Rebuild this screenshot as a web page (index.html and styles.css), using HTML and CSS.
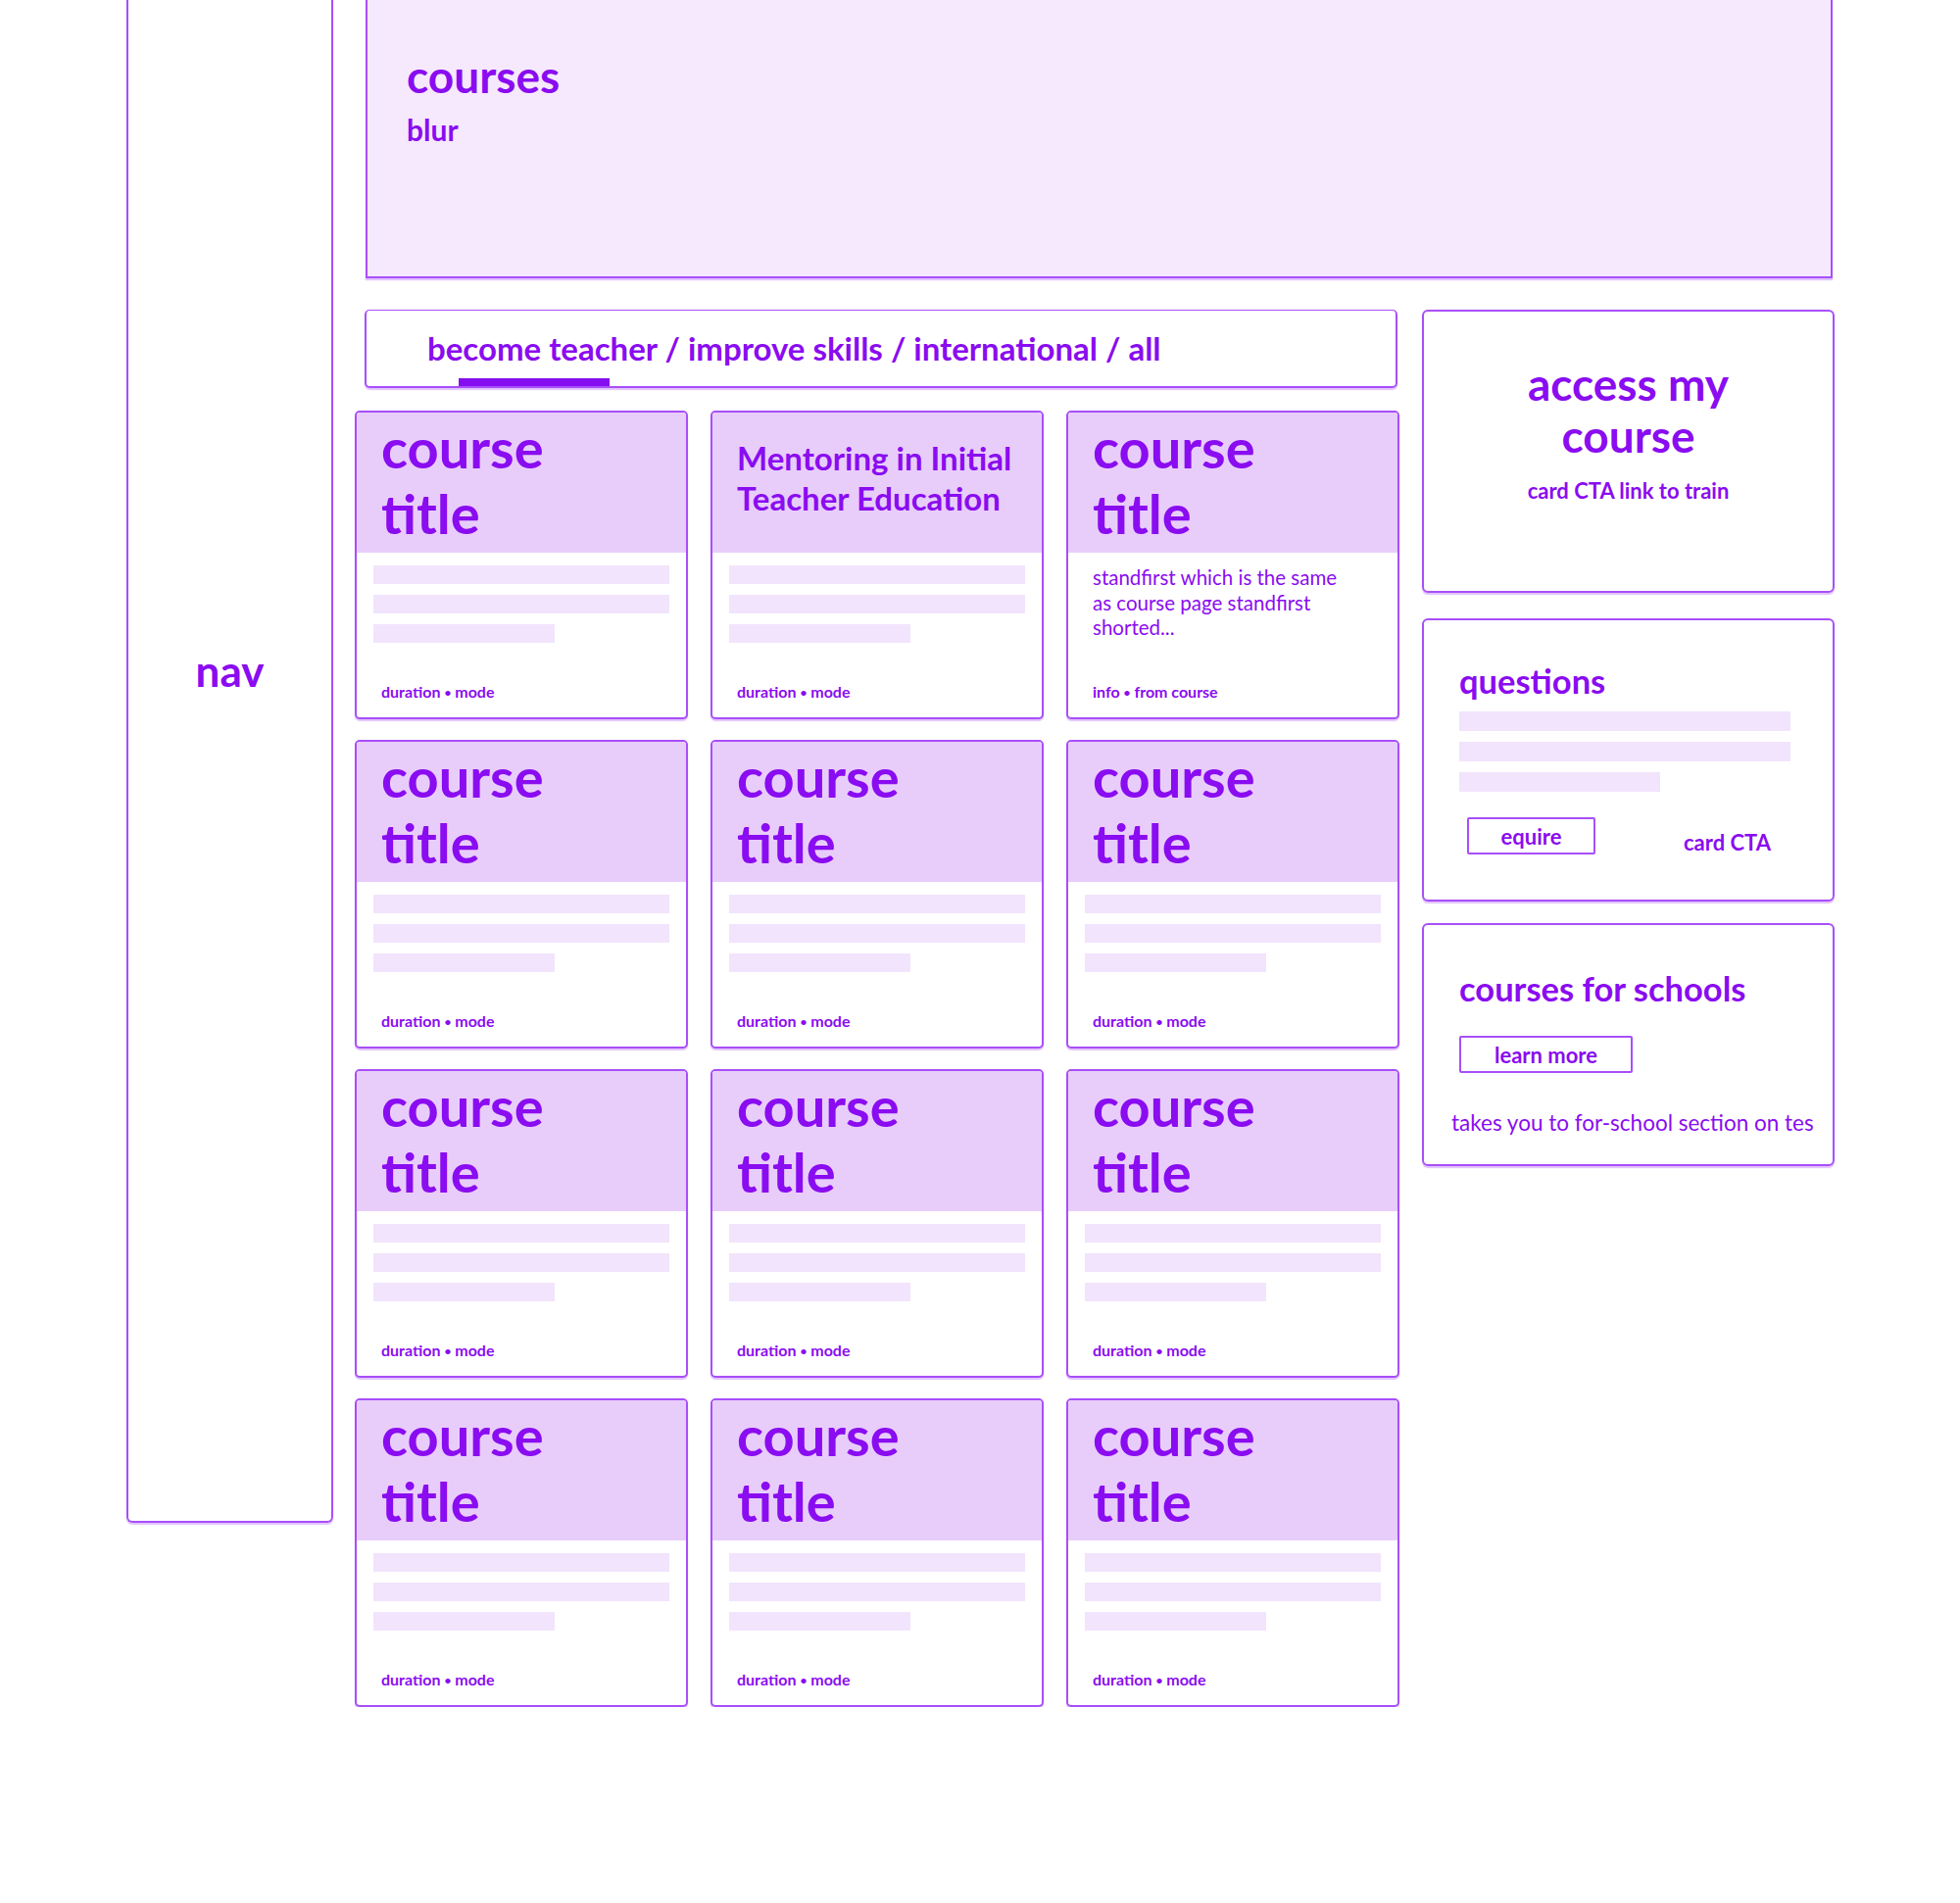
FILE: index.html
```html
<!DOCTYPE html>
<html lang="en">
<head>
    <meta charset="UTF-8">
    <title>Courses - wireframe</title>
    <link rel="stylesheet" href="styles.css">
</head>
<body>
    <div class="page">
        <aside class="nav">
            <span class="nav-label">nav</span>
        </aside>

        <main class="main">
            <header class="hero">
                <h1>courses</h1>
                <p class="hero-sub">blur</p>
            </header>

            <div class="content">
                <section class="catalogue">
                    <div class="tabs">
                        <p class="tab-links">become teacher / improve skills / international / all</p>
                        <div class="tab-indicator"></div>
                    </div>

                    <div class="course-grid">
                        <div class="course-card">
                            <div class="course-head"><h2 class="course-title">course title</h2></div>
                            <div class="course-body">
                                <div class="bar"></div>
                                <div class="bar"></div>
                                <div class="bar short"></div>
                            </div>
                            <p class="course-meta">duration <span class="dot">&bull;</span> mode</p>
                        </div>
                        <div class="course-card">
                            <div class="course-head"><h2 class="course-title small">Mentoring in Initial Teacher Education</h2></div>
                            <div class="course-body">
                                <div class="bar"></div>
                                <div class="bar"></div>
                                <div class="bar short"></div>
                            </div>
                            <p class="course-meta">duration <span class="dot">&bull;</span> mode</p>
                        </div>
                        <div class="course-card">
                            <div class="course-head"><h2 class="course-title">course title</h2></div>
                            <div class="course-body">
                                <p class="standfirst">standfirst which is the same as course page standfirst shorted...</p>
                            </div>
                            <p class="course-meta">info <span class="dot">&bull;</span> from course</p>
                        </div>

                        <div class="course-card">
                            <div class="course-head"><h2 class="course-title">course title</h2></div>
                            <div class="course-body">
                                <div class="bar"></div>
                                <div class="bar"></div>
                                <div class="bar short"></div>
                            </div>
                            <p class="course-meta">duration <span class="dot">&bull;</span> mode</p>
                        </div>
                        <div class="course-card">
                            <div class="course-head"><h2 class="course-title">course title</h2></div>
                            <div class="course-body">
                                <div class="bar"></div>
                                <div class="bar"></div>
                                <div class="bar short"></div>
                            </div>
                            <p class="course-meta">duration <span class="dot">&bull;</span> mode</p>
                        </div>
                        <div class="course-card">
                            <div class="course-head"><h2 class="course-title">course title</h2></div>
                            <div class="course-body">
                                <div class="bar"></div>
                                <div class="bar"></div>
                                <div class="bar short"></div>
                            </div>
                            <p class="course-meta">duration <span class="dot">&bull;</span> mode</p>
                        </div>

                        <div class="course-card">
                            <div class="course-head"><h2 class="course-title">course title</h2></div>
                            <div class="course-body">
                                <div class="bar"></div>
                                <div class="bar"></div>
                                <div class="bar short"></div>
                            </div>
                            <p class="course-meta">duration <span class="dot">&bull;</span> mode</p>
                        </div>
                        <div class="course-card">
                            <div class="course-head"><h2 class="course-title">course title</h2></div>
                            <div class="course-body">
                                <div class="bar"></div>
                                <div class="bar"></div>
                                <div class="bar short"></div>
                            </div>
                            <p class="course-meta">duration <span class="dot">&bull;</span> mode</p>
                        </div>
                        <div class="course-card">
                            <div class="course-head"><h2 class="course-title">course title</h2></div>
                            <div class="course-body">
                                <div class="bar"></div>
                                <div class="bar"></div>
                                <div class="bar short"></div>
                            </div>
                            <p class="course-meta">duration <span class="dot">&bull;</span> mode</p>
                        </div>

                        <div class="course-card">
                            <div class="course-head"><h2 class="course-title">course title</h2></div>
                            <div class="course-body">
                                <div class="bar"></div>
                                <div class="bar"></div>
                                <div class="bar short"></div>
                            </div>
                            <p class="course-meta">duration <span class="dot">&bull;</span> mode</p>
                        </div>
                        <div class="course-card">
                            <div class="course-head"><h2 class="course-title">course title</h2></div>
                            <div class="course-body">
                                <div class="bar"></div>
                                <div class="bar"></div>
                                <div class="bar short"></div>
                            </div>
                            <p class="course-meta">duration <span class="dot">&bull;</span> mode</p>
                        </div>
                        <div class="course-card">
                            <div class="course-head"><h2 class="course-title">course title</h2></div>
                            <div class="course-body">
                                <div class="bar"></div>
                                <div class="bar"></div>
                                <div class="bar short"></div>
                            </div>
                            <p class="course-meta">duration <span class="dot">&bull;</span> mode</p>
                        </div>
                    </div>
                </section>

                <aside class="sidebar">
                    <div class="side-card access">
                        <h2 class="access-title">access my course</h2>
                        <p class="access-link">card CTA link to train</p>
                    </div>

                    <div class="side-card questions">
                        <h2 class="side-title">questions</h2>
                        <div class="bar wide"></div>
                        <div class="bar wide"></div>
                        <div class="bar mid"></div>
                        <div class="cta-row">
                            <button type="button" class="outline-btn enquire">equire</button>
                            <span class="cta-text">card CTA</span>
                        </div>
                    </div>

                    <div class="side-card schools">
                        <h2 class="side-title">courses for schools</h2>
                        <button type="button" class="outline-btn learn">learn more</button>
                        <p class="schools-note">takes you to for-school section on tes</p>
                    </div>
                </aside>
            </div>
        </main>
    </div>
</body>
</html>
```

FILE: styles.css
```css
body {
    margin: 0;
    font-family: Lato, "Liberation Sans", sans-serif;
    color: #8a0cf0;
    background: white;
}

h1, h2, p {
    margin: 0;
}

.page {
    display: flex;
    align-items: flex-start;
    gap: 33px;
    padding-left: 129px;
}

/* left navigation placeholder */
.nav {
    box-sizing: border-box;
    width: 211px;
    height: 1554px;
    flex-shrink: 0;
    border: 2px solid #a84ff9;
    border-top: none;
    border-radius: 0 0 6px 6px;
    box-shadow: 0 2px 1px rgba(168, 79, 249, 0.35);
    text-align: center;
    padding-top: 658px;
}

.nav-label {
    display: block;
    font-size: 44px;
    font-weight: 700;
    line-height: 52px;
}

.main {
    width: 1497px;
    flex-shrink: 0;
}

.hero {
    box-sizing: border-box;
    height: 284px;
    background: #f6e9fd;
    border: 2px solid #a84ff9;
    border-top: none;
    box-shadow: 0 2px 1px rgba(168, 79, 249, 0.35);
    padding: 52px 40px 0;
}

.hero h1 {
    font-size: 46px;
    font-weight: 700;
    line-height: 52px;
}

.hero-sub {
    font-size: 30px;
    font-weight: 700;
    line-height: 36px;
    margin-top: 10px;
}

.content {
    display: flex;
    align-items: flex-start;
    gap: 16px;
    margin-top: 32px;
    margin-left: -11px;
}

.catalogue {
    width: 1073px;
    flex-shrink: 0;
}

.tabs {
    box-sizing: border-box;
    height: 80px;
    margin: 0 9px 0 10px;
    border: 2px solid #a84ff9;
    border-top-width: 1.5px;
    border-radius: 5px;
    box-shadow: 0 2px 1px rgba(168, 79, 249, 0.35);
    display: flex;
    flex-direction: column;
    padding: 20px 0 0 62px;
}

.tab-links {
    font-size: 33px;
    font-weight: 700;
    line-height: 36px;
}

.tab-indicator {
    margin-top: auto;
    margin-left: 32px;
    width: 154px;
    height: 8px;
    background: #850ef0;
}

.course-grid {
    display: grid;
    grid-template-columns: repeat(3, 340px);
    grid-auto-rows: 315px;
    column-gap: 23px;
    row-gap: 21px;
    margin-top: 23px;
}

.course-card {
    box-sizing: border-box;
    border: 2px solid #a84ff9;
    border-radius: 5px;
    box-shadow: 0 2px 1px rgba(168, 79, 249, 0.35);
    overflow: hidden;
    display: flex;
    flex-direction: column;
    background: white;
}

.course-head {
    height: 143px;
    flex-shrink: 0;
    background: #e8cdfb;
    padding: 2px 18px 0 25px;
    box-sizing: border-box;
}

.course-title {
    font-size: 56px;
    font-weight: 700;
    line-height: 67px;
    width: 4em;
}

.course-title.small {
    width: auto;
    font-size: 33px;
    line-height: 41px;
    padding-top: 24px;
}

.course-body {
    padding: 13px 17px 0;
}

.bar {
    height: 19px;
    background: #f2e4fc;
    margin-bottom: 11px;
}

.bar.short {
    width: 185px;
}

.standfirst {
    font-size: 20.5px;
    line-height: 25.5px;
    padding: 0 0 0 8px;
    width: 262px;
}

.course-meta {
    margin-top: auto;
    padding: 0 25px 17px;
    font-size: 16px;
    font-weight: 700;
}

.dot {
    font-size: 12px;
    vertical-align: 1px;
}

/* right column */
.sidebar {
    width: 421px;
    flex-shrink: 0;
    display: flex;
    flex-direction: column;
}

.side-card {
    box-sizing: border-box;
    border: 2px solid #a84ff9;
    border-radius: 6px;
    box-shadow: 0 2px 1px rgba(168, 79, 249, 0.35);
}

.access {
    height: 289px;
    text-align: center;
    padding: 47px 30px 0;
}

.access-title {
    font-size: 46px;
    font-weight: 700;
    line-height: 53px;
    width: 5.5em;
    margin: 0 auto;
}

.access-link {
    font-size: 22px;
    font-weight: 700;
    line-height: 26px;
    margin-top: 17px;
}

.questions {
    height: 289px;
    margin-top: 26px;
    padding: 43px 36px 0;
}

.side-title {
    font-size: 34.5px;
    font-weight: 700;
    line-height: 38px;
}

.questions .side-title {
    margin-bottom: 12px;
}

.questions .bar {
    height: 20px;
}

.bar.wide {
    width: 338px;
}

.bar.mid {
    width: 205px;
    margin-bottom: 0;
}

.cta-row {
    display: flex;
    align-items: flex-end;
    margin-top: 26px;
    padding-left: 8px;
}

.outline-btn {
    box-sizing: border-box;
    height: 38px;
    border: 2px solid #a84ff9;
    border-radius: 2px;
    background: white;
    color: #8a0cf0;
    font-family: inherit;
    font-size: 22px;
    font-weight: 700;
    padding: 0;
}

.enquire {
    width: 131px;
}

.cta-text {
    margin-left: 90px;
    font-size: 22px;
    font-weight: 700;
    line-height: 24px;
}

.schools {
    height: 248px;
    margin-top: 22px;
    padding: 46px 30px 0 36px;
}

.learn {
    display: block;
    width: 177px;
    margin-top: 29px;
}

.schools-note {
    font-size: 22.5px;
    line-height: 26px;
    margin: 38px 0 0 -8px;
    white-space: nowrap;
}
```
